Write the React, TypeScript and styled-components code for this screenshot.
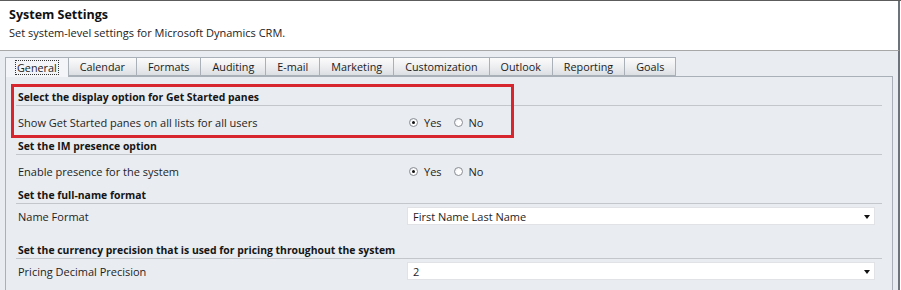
import React from "react";
import styled, { createGlobalStyle } from "styled-components";

const GlobalStyle = createGlobalStyle`
    html, body {
        margin: 0;
        padding: 0;
        background: #ffffff;
    }
    body {
        font-family: "Open Sans", "Noto Sans", sans-serif;
        color: #1e1e1e;
    }
`;

const Window = styled.div`
    width: 901px;
    height: 290px;
    box-sizing: border-box;
    border-top: 1px solid #5c5c5c;
    display: flex;
    flex-direction: column;
    overflow: hidden;
    background: #ffffff;
`;

const Header = styled.div`
    height: 50px;
    padding: 5px 0 0 9px;
    box-sizing: border-box;
    border-bottom: 1px solid #a7a7a7;
    border-right: 2px solid #6c737b;
    margin-right: 1px;
`;

const Title = styled.div`
    font-size: 12.5px;
    font-weight: 700;
    line-height: 18px;
    color: #111;
`;

const Subtitle = styled.div`
    font-size: 11px;
    line-height: 16px;
    margin-top: 1px;
    color: #222;
`;

const Body = styled.div`
    flex: 1;
    display: flex;
    flex-direction: column;
    padding: 6px 0 0 5px;
    background: #e9ecf0;
    border-right: 2px solid #6c737b;
    margin-right: 1px;
    min-height: 0;
`;

const TabStrip = styled.div`
    display: flex;
    height: 19px;
    position: relative;
    z-index: 1;
`;

const Tab = styled.div<{ $active?: boolean }>`
    height: ${(p) => (p.$active ? "20px" : "19px")};
    box-sizing: border-box;
    padding: 0 10px;
    display: flex;
    align-items: center;
    font-size: 10.8px;
    color: #1b1b1b;
    border: 1px solid #a9b0b8;
    border-left: none;
    border-bottom: ${(p) => (p.$active ? "none" : "1px solid #a9b0b8")};
    background: ${(p) =>
        p.$active
            ? "#f3f5f8"
            : "linear-gradient(to bottom, #fbfbfc 0%, #eff0f2 45%, #dcdfe3 100%)"};

    &:first-child {
        border-left: 1px solid #a9b0b8;
    }
`;

const TabLabel = styled.span<{ $focused?: boolean }>`
    padding: 0 1px;
    outline: ${(p) => (p.$focused ? "1px dotted #333" : "none")};
    line-height: 13px;
`;

const Panel = styled.div`
    flex: 1;
    position: relative;
    margin-right: 5px;
    border: 1px solid #a9b0b8;
    border-bottom: none;
    padding: 10px 10px 0 10px;
    background: #e9ecf0;
`;

const Section = styled.div<{ $gap?: number }>`
    margin-bottom: ${(p) => p.$gap ?? 2}px;
`;

const Heading = styled.div`
    height: 19px;
    box-sizing: border-box;
    padding: 3px 0 0 2px;
    line-height: 14px;
    font-size: 10.4px;
    font-weight: 700;
    border-bottom: 1px solid #c3c7cc;
    color: #151515;
`;

const Row = styled.div<{ $compact?: boolean }>`
    display: grid;
    grid-template-columns: 389px 1fr;
    align-items: center;
    height: ${(p) => (p.$compact ? 18 : 24)}px;
    margin-top: ${(p) => (p.$compact ? 3 : 4)}px;
    padding: 0 7px 0 2px;
`;

const Label = styled.span`
    font-size: 11px;
    color: #1e1e1e;
`;

const RadioGroup = styled.div`
    display: flex;
    align-items: center;
    gap: 12px;
    padding-left: 2px;
`;

const RadioOption = styled.label`
    display: flex;
    align-items: center;
    gap: 6px;
    font-size: 11px;
    color: #1e1e1e;
`;

const RadioCircle = styled.span<{ $checked?: boolean }>`
    width: 9px;
    height: 9px;
    box-sizing: border-box;
    border-radius: 50%;
    border: 1px solid #8b8f95;
    background: radial-gradient(circle at 60% 60%, #ffffff 40%, #dde0e4 100%);
    display: flex;
    align-items: center;
    justify-content: center;

    &::after {
        content: "";
        width: 3px;
        height: 3px;
        border-radius: 50%;
        background: ${(p) => (p.$checked ? "#111" : "transparent")};
    }
`;

const Select = styled.div`
    height: 18px;
    box-sizing: border-box;
    background: #ffffff;
    border: 1px solid #e0e2e6;
    display: flex;
    align-items: center;
    justify-content: space-between;
    padding: 0 4px 0 5px;
    font-size: 11px;
    color: #1e1e1e;
`;

const Arrow = styled.span`
    width: 0;
    height: 0;
    border-left: 3.5px solid transparent;
    border-right: 3.5px solid transparent;
    border-top: 4px solid #111;
    margin-top: 2px;
`;

const Highlight = styled.div`
    position: absolute;
    left: 5px;
    top: 7px;
    width: 503px;
    height: 54px;
    box-sizing: border-box;
    border: 3px solid #d7262e;
    pointer-events: none;
`;

const tabs = [
    "General",
    "Calendar",
    "Formats",
    "Auditing",
    "E-mail",
    "Marketing",
    "Customization",
    "Outlook",
    "Reporting",
    "Goals",
];

const YesNo: React.FC<{ value: boolean }> = ({ value }) => (
    <RadioGroup>
        <RadioOption>
            <RadioCircle $checked={value} />
            Yes
        </RadioOption>
        <RadioOption>
            <RadioCircle $checked={!value} />
            No
        </RadioOption>
    </RadioGroup>
);

const App: React.FC = () => {
    return (
        <>
            <GlobalStyle />
            <Window>
                <Header>
                    <Title>System Settings</Title>
                    <Subtitle>Set system-level settings for Microsoft Dynamics CRM.</Subtitle>
                </Header>
                <Body>
                    <TabStrip>
                        {tabs.map((t, i) => (
                            <Tab key={t} $active={i === 0}>
                                <TabLabel $focused={i === 0}>{t}</TabLabel>
                            </Tab>
                        ))}
                    </TabStrip>
                    <Panel>
                        <Section>
                            <Heading>Select the display option for Get Started panes</Heading>
                            <Row>
                                <Label>Show Get Started panes on all lists for all users</Label>
                                <YesNo value={true} />
                            </Row>
                        </Section>
                        <Section>
                            <Heading>Set the IM presence option</Heading>
                            <Row>
                                <Label>Enable presence for the system</Label>
                                <YesNo value={true} />
                            </Row>
                        </Section>
                        <Section $gap={15}>
                            <Heading>Set the full-name format</Heading>
                            <Row $compact>
                                <Label>Name Format</Label>
                                <Select>
                                    First Name Last Name
                                    <Arrow />
                                </Select>
                            </Row>
                        </Section>
                        <Section>
                            <Heading>Set the currency precision that is used for pricing throughout the system</Heading>
                            <Row $compact>
                                <Label>Pricing Decimal Precision</Label>
                                <Select>
                                    2
                                    <Arrow />
                                </Select>
                            </Row>
                        </Section>
                        <Highlight />
                    </Panel>
                </Body>
            </Window>
        </>
    );
};

export default App;
